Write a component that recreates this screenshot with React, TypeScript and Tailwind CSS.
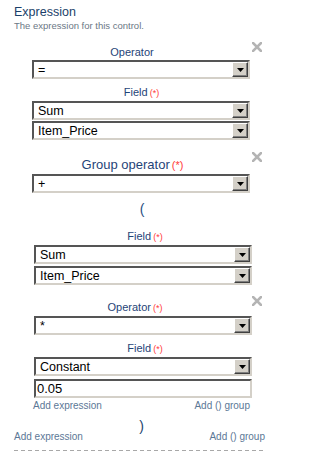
import React from "react";

const LABEL = "text-[#1f4477]";

function XIcon({ className }: { className: string }) {
  return (
    <svg
      className={className}
      width="10"
      height="10"
      viewBox="0 0 10 10"
      aria-hidden="true"
    >
      <path d="M1 1 L9 9 M9 1 L1 9" stroke="#b4b4b4" strokeWidth="2.6" strokeLinecap="square" />
    </svg>
  );
}

function Select({ value, className = "" }: { value: string; className?: string }) {
  return (
    <div
      className={
        "flex h-[19px] w-[218px] border-2 border-t-[#555555] border-l-[#555555] border-b-[#d4d0c8] border-r-[#d4d0c8] bg-white " +
        className
      }
    >
      <div className="flex-1 overflow-hidden whitespace-nowrap pl-[4px] pt-[1px] text-[12.5px] leading-[15px] text-black">
        {value}
      </div>
      <div className="flex h-[15px] w-[16px] items-center justify-center border border-t-white border-l-white border-b-[#404040] border-r-[#404040] bg-[#d4d0c8] shadow-[inset_-1px_-1px_0_#808080]">
        <svg width="7" height="4" viewBox="0 0 7 4" aria-hidden="true">
          <polygon points="0,0 7,0 3.5,4" fill="#000" />
        </svg>
      </div>
    </div>
  );
}

function Req({ big = false }: { big?: boolean }) {
  return (
    <span className={(big ? "text-[11px]" : "text-[9px]") + " ml-[2px] text-[#ff3b3b]"}>(*)</span>
  );
}

export default function App() {
  return (
    <div
      className="min-h-[452px] w-[272px] bg-white pl-[14px] pr-[7px]"
      style={{ fontFamily: '"Liberation Sans", Arial, sans-serif' }}
    >
      {/* Header */}
      <div className="pt-[5px] text-[12.5px] leading-[15px] text-[#1b3f6a]">Expression</div>
      <div className="text-[9.5px] leading-[11px] text-[#6b7785]">The expression for this control.</div>

      {/* Block 1 */}
      <div className="relative mt-[15px]">
        <XIcon className="absolute right-[3px] top-[-4px]" />
        <div className={"flex justify-center pr-[15px] text-[11px] leading-[13px] " + LABEL}>Operator</div>
        <Select value="=" className="ml-[18px] mt-[1px]" />
        <div className={"mt-[7px] flex items-baseline justify-center pl-[4px] text-[11px] leading-[13px] " + LABEL}>
          Field<Req />
        </div>
        <Select value="Sum" className="ml-[18px] mt-[1px]" />
        <Select value="Item_Price" className="ml-[18px] mt-[1px]" />
      </div>

      {/* Block 2 (group) */}
      <div className="relative mt-[17px]">
        <XIcon className="absolute right-[3px] top-[-5px]" />
        <div className={"flex items-baseline justify-center pr-[14px] text-[13px] leading-[15px] " + LABEL}>
          Group operator<Req big />
        </div>
        <Select value="+" className="ml-[18px] mt-[1px]" />
        <div className="mt-[8px] flex h-[16px] justify-center pl-[5px] text-[14px] leading-[16px] text-[#2a4f7f]">(</div>

        {/* nested group */}
        <div className="ml-[19px] mr-[15px] mt-[13px]">
          <div className={"flex items-baseline justify-center pl-[7px] text-[11px] leading-[13px] " + LABEL}>
            Field<Req />
          </div>
          <Select value="Sum" className="ml-[1px] mt-[1px]" />
          <Select value="Item_Price" className="ml-[1px] mt-[2px]" />

          <div className="relative mt-[16px]">
            <XIcon className="absolute right-[-12px] top-[-5px]" />
            <div className={"flex items-baseline justify-center pr-[13px] text-[11px] leading-[13px] " + LABEL}>
              Operator<Req />
            </div>
            <Select value="*" className="ml-[1px] mt-[1px]" />
            <div className={"mt-[7px] flex items-baseline justify-center pl-[7px] text-[11px] leading-[13px] " + LABEL}>
              Field<Req />
            </div>
            <Select value="Constant" className="ml-[1px] mt-[1px]" />
            <div className="ml-[1px] mt-[3px] flex h-[19px] w-[218px] items-center border-2 border-t-[#555555] border-l-[#555555] border-b-[#d4d0c8] border-r-[#d4d0c8] bg-white pl-[1px] text-[13px] leading-[15px] text-black">
              0.05
            </div>
          </div>

          <div className="mt-[2px] flex justify-between text-[10px] leading-[12px] text-[#5c7896]">
            <span>Add expression</span>
            <span>Add () group</span>
          </div>
        </div>

        <div className="mt-[8px] flex h-[12px] justify-center pl-[4px] text-[14px] leading-[12px] text-[#24466e]">)</div>
      </div>

      <div className="flex justify-between text-[10px] leading-[10px] text-[#5c7896]">
        <span>Add expression</span>
        <span>Add () group</span>
      </div>
      <div className="mt-[8px] h-px w-full bg-[repeating-linear-gradient(to_right,#a8a8a8_0_4px,transparent_4px_7px)]" />
    </div>
  );
}
